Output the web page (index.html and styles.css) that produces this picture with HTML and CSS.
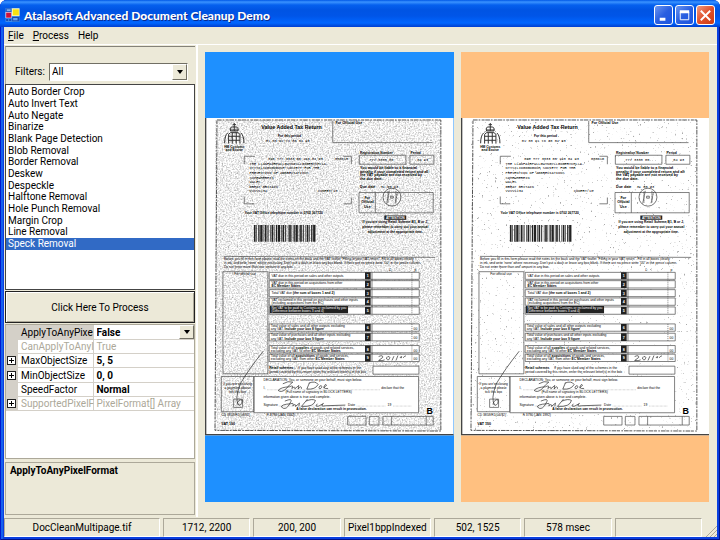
FILE: index.html
```
<!DOCTYPE html>
<html lang="en">
<head>
  <meta charset="UTF-8">
  <title>Atalasoft Advanced Document Cleanup Demo</title>
  <link rel="stylesheet" href="styles.css">
</head>
<body>
  <div class="window">
    <header class="title-bar">
      <svg class="app-icon" viewBox="0 0 42 42">
        <rect x="0" y="0" width="42" height="42" fill="#3d8be8"/>
        <rect x="1" y="1" width="17" height="11" fill="#2a5fc4"/>
        <rect x="4" y="4" width="11" height="5" fill="#7fb4f2"/>
        <rect x="0" y="12" width="18" height="18" fill="#e8e0f0"/>
        <rect x="2" y="14" width="15" height="15" fill="#d0103a"/>
        <rect x="19" y="1" width="23" height="23" fill="#fff9c0"/>
        <rect x="22" y="4" width="18" height="18" fill="#f8e010"/>
        <rect x="2" y="33" width="6" height="6" fill="#1c4ab0"/>
        <rect x="11" y="33" width="6" height="6" fill="#1c4ab0"/>
        <rect x="20" y="27" width="21" height="13" fill="#1c4ab0"/>
        <rect x="23" y="30" width="13" height="7" fill="#6aa6f0"/>
      </svg>
      <h1>Atalasoft Advanced Document Cleanup Demo</h1>
      <div class="window-buttons">
        <button type="button" aria-label="Minimize"><svg viewBox="0 0 18 18"><path d="M5 13h6" stroke="#fff" stroke-width="3"/></svg></button>
        <button type="button" aria-label="Maximize"><svg viewBox="0 0 18 18"><path d="M4 5h10" stroke="#fff" stroke-width="3"/><path d="M4.500 5.500h9v8h-9z" fill="none" stroke="#fff"/></svg></button>
        <button type="button" class="close" aria-label="Close"><svg viewBox="0 0 18 18"><path d="M4 4l10 10M14 4l-10 10" stroke="#fff" stroke-width="2"/></svg></button>
      </div>
    </header>

    <nav class="menu-bar">
      <button type="button"><u>F</u>ile</button>
      <button type="button"><u>P</u>rocess</button>
      <button type="button">Help</button>
    </nav>

    <div class="content">
      <aside class="sidebar">
        <div class="filters">
          <label for="filter">Filters:</label>
          <div class="combo">
            <select id="filter"><option>All</option></select>
            <span class="arrow"></span>
          </div>
        </div>
        <select class="filter-list" size="14" aria-label="Filter list">
          <option>Auto Border Crop</option>
          <option>Auto Invert Text</option>
          <option>Auto Negate</option>
          <option>Binarize</option>
          <option>Blank Page Detection</option>
          <option>Blob Removal</option>
          <option>Border Removal</option>
          <option>Deskew</option>
          <option>Despeckle</option>
          <option>Halftone Removal</option>
          <option>Hole Punch Removal</option>
          <option>Margin Crop</option>
          <option>Line Removal</option>
          <option selected>Speck Removal</option>
        </select>
        <button type="button" class="process">Click Here To Process</button>
        <div class="property-grid">
          <table>
            <tr class="current">
              <td class="gutter"></td>
              <th scope="row" title="ApplyToAnyPixelFormat">ApplyToAnyPixe</th>
              <td class="value"><div class="combo flat"><select aria-label="ApplyToAnyPixelFormat"><option>False</option></select><span class="arrow"></span></div></td>
            </tr>
            <tr class="readonly">
              <td class="gutter"></td>
              <th scope="row" title="CanApplyToAnyPixelFormat">CanApplyToAnyI</th>
              <td class="value">True</td>
            </tr>
            <tr>
              <td class="gutter"><button type="button" class="expand" aria-label="Expand MaxObjectSize"></button></td>
              <th scope="row">MaxObjectSize</th>
              <td class="value">5, 5</td>
            </tr>
            <tr>
              <td class="gutter"><button type="button" class="expand" aria-label="Expand MinObjectSize"></button></td>
              <th scope="row">MinObjectSize</th>
              <td class="value">0, 0</td>
            </tr>
            <tr>
              <td class="gutter"></td>
              <th scope="row">SpeedFactor</th>
              <td class="value">Normal</td>
            </tr>
            <tr class="readonly">
              <td class="gutter"><button type="button" class="expand" aria-label="Expand SupportedPixelFormats"></button></td>
              <th scope="row" title="SupportedPixelFormats">SupportedPixelF</th>
              <td class="value">PixelFormat[] Array</td>
            </tr>
          </table>
        </div>
        <div class="property-help">ApplyToAnyPixelFormat</div>
      </aside>

      <main class="viewers">
        <section class="viewer before">
          <svg class="page" viewBox="18 21 747 954">
            <defs>
              <filter id="grain" x="0" y="0" width="1" height="1">
                <feTurbulence type="fractalNoise" baseFrequency="0.22" numOctaves="3" seed="4"/>
                <feColorMatrix values="0 0 0 0 0.4  0 0 0 0 0.4  0 0 0 0 0.4  2 0 0 0 -0.8"/>
              </filter>
              <filter id="specks" x="0" y="0" width="1" height="1">
                <feTurbulence type="fractalNoise" baseFrequency="0.15" numOctaves="2" seed="9"/>
                <feColorMatrix values="0 0 0 0 0.4  0 0 0 0 0.4  0 0 0 0 0.4  8 0 0 0 -5.5"/>
              </filter>
              <g id="form">
                <!-- page edges -->
                <path d="M20 21V975M18 973H765" fill="none" stroke="#444" stroke-width="4"/>
                <path d="M54 27H727V962L48 960z" fill="none" stroke="#555" stroke-width="3" stroke-dasharray="14 3 5 4 9 2"/>

                <!-- crest -->
                <g fill="none" stroke="#333" stroke-width="3">
                  <path d="M106 36V60M101 41H111M95 60Q90 46 105 48Q121 46 117 60zM94 57H118"/>
                  <path d="M89 98V70L95 65H117L123 70V98M100 66V98M112 66V98M89 76H123M89 88H123"/>
                  <path d="M86 66Q77 74 77 97M126 66Q135 74 135 97"/>
                </g>
                <g class="bold center" font-size="10">
                  <text x="106" y="111">HM Customs</text>
                  <text x="106" y="121">and Excise</text>
                </g>
                <text class="bold center" font-size="16" x="278" y="53">Value Added Tax Return</text>
                <text class="bold center" font-size="10" x="272" y="79">For this period</text>
                <text class="mono" font-size="11" x="201" y="93">01 03 91 to 30 04 93</text>

                <path class="box" d="M402 30V95H702"/>
                <text class="bold" font-size="11" x="410" y="40">For Official Use</text>

                <!-- address -->
                <path class="box" d="M136 160V136H168M434 136H458V160M136 257V279H166M434 279H458V260"/>
                <g class="mono" font-size="11">
                  <text x="208" y="147">098 777 3333 05 193 04 93</text>
                  <text x="409" y="147">000615</text>
                  <text x="152" y="161">THE LLANFAIRPWLLGWYNGYLLGOGERYCHLLA-</text>
                  <text x="152" y="175">NTYSILIOGOGOGOCH SOCIETY FOR THE</text>
                  <text x="152" y="189">PREVENTION OF ABBREVIATIONS</text>
                  <text x="152" y="203">SOMEWHEREIN</text>
                  <text x="152" y="216">WALES</text>
                  <text x="152" y="230">GREAT BRITAIN</text>
                  <text x="152" y="244">VVVV1234</text>
                  <text x="357" y="244">CODERT/10</text>
                </g>
                <text class="bold" font-size="10" x="137" y="310">Your VAT Office telephone number is 0702 367720</text>
                <path d="M165 368H352" fill="none" stroke="#222" stroke-width="50" stroke-dasharray="5 2 2 4 4 2 7 3 2 2 5 3 3 5 2 2"/>

                <!-- registration -->
                <g class="bold" font-size="10">
                  <text x="484" y="129">Registration Number</text>
                  <text x="636" y="129">Period</text>
                </g>
                <path class="box" d="M482 133H622V160H482zM634 133H706V160H634z"/>
                <g class="mono" font-size="11">
                  <text x="512" y="150">777 3333 05</text>
                  <text x="656" y="150">04 93</text>
                </g>
                <g class="bold" font-size="11">
                  <text x="484" y="174">You would be liable to a financial</text>
                  <text x="484" y="185">penalty if your completed return and all</text>
                  <text x="484" y="196">the VAT payable are not received by</text>
                  <text x="484" y="207">the due date.</text>
                  <text x="484" y="231">Due date</text>
                </g>
                <text class="mono" font-size="11" x="546" y="231">31 05 93</text>
                <path class="box" d="M481 245H704V306H481zM530 245V306"/>
                <g class="bold center" font-size="11">
                  <text x="506" y="265">For</text>
                  <text x="506" y="278">Official</text>
                  <text x="506" y="291">Use</text>
                </g>
                <g fill="none" stroke="#333" stroke-width="2">
                  <circle cx="580" cy="259" r="27"/>
                  <path d="M568 242V277M572 240L564 278M592 240V276M597 244L589 278" stroke-dasharray="4 1"/>
                  <path d="M576 256H584V262H576z"/>
                </g>
                <path d="M557 314H623V327H557z" fill="#222"/>
                <text class="bold center light" font-size="10" x="590" y="324">ATTENTION</text>
                <g class="bold center" font-size="10">
                  <text x="590" y="338">If you are using Retail Scheme B1, B or J,</text>
                  <text x="590" y="352">please remember to carry out your annual</text>
                  <text x="590" y="366">adjustment at the appropriate time.</text>
                </g>

                <!-- instructions -->
                <path class="box" d="M75 437L710 440"/>
                <g class="sans" font-size="10">
                  <text x="75" y="449">Before you fill in this form please read the notes on the back and the VAT leaflet "Filling in your VAT return". Fill in all boxes clearly</text>
                  <text x="75" y="461">in ink, and write 'none' where necessary. Don't put a dash or leave any box blank. If there are no pence write "00" in the pence column.</text>
                  <text x="75" y="473">Do not enter more than one amount in any box.</text>
                  <text x="106" y="493">For official use</text>
                  <text x="572" y="481">£</text>
                  <text x="648" y="481">p</text>
                </g>
                <path class="box" d="M72 483H207V790H72z"/>

                <!-- VAT lines -->
                <g class="box white">
                  <path d="M211 485H662V506H211zM211 510H662V532H211zM211 537H662V558H211zM211 562H662V584H211zM211 589H662V611H211z"/>
                  <path d="M211 640H662V662H211zM211 668H662V691H211zM211 705H662V727H211zM211 731H662V753H211z"/>
                  <path d="M520 485V611M520 640V691M520 705V753"/>
                  <path d="M640 485V611M640 640V691M640 705V753" stroke-dasharray="3 3"/>
                </g>
                <path d="M499 485H516V506H499zM499 510H516V532H499zM499 537H516V558H499zM499 562H516V584H499zM499 589H516V611H499zM499 640H516V662H499zM499 668H516V691H499zM499 705H516V727H499zM499 731H516V753H499z" fill="#222"/>
                <g class="bold center light" font-size="11">
                  <text x="507" y="500">1</text>
                  <text x="507" y="525">2</text>
                  <text x="507" y="552">3</text>
                  <text x="507" y="577">4</text>
                  <text x="507" y="604">5</text>
                  <text x="507" y="655">6</text>
                  <text x="507" y="684">7</text>
                  <text x="507" y="720">8</text>
                  <text x="507" y="746">9</text>
                </g>
                <path d="M213 586H448V608H213z" fill="#222"/>
                <g class="sans" font-size="10">
                  <text x="218" y="499">VAT due in this period on sales and other outputs</text>
                  <text x="218" y="519">VAT due in this period on acquisitions from other</text>
                  <text class="bold" x="218" y="529">EC Member States</text>
                  <text x="218" y="551">Total VAT due <tspan class="bold">(the sum of boxes 1 and 2)</tspan></text>
                  <text x="218" y="571">VAT reclaimed in this period on purchases and other inputs</text>
                  <text x="218" y="581">(including acquisitions from the EC)</text>
                  <text class="light" x="218" y="595">Net VAT to be paid to Customs or reclaimed by you</text>
                  <text class="light" x="218" y="605">(Difference between boxes 3 and 4)</text>
                  <text x="216" y="649">Total value of sales and all other outputs excluding</text>
                  <text x="216" y="659">any VAT. <tspan class="bold">Include your box 8 figure</tspan></text>
                  <text x="216" y="677">Total value of purchases and all other inputs excluding</text>
                  <text x="216" y="687">any VAT. <tspan class="bold">Include your box 9 figure</tspan></text>
                  <text x="216" y="714">Total value of all <tspan class="bold">supplies</tspan> of goods and related services,</text>
                  <text x="216" y="724">excluding any VAT, to other <tspan class="bold">EC Member States</tspan></text>
                  <text x="216" y="740">Total value of all <tspan class="bold">acquisitions</tspan> of goods and services,</text>
                  <text x="216" y="750">excluding any VAT, from other <tspan class="bold">EC Member States</tspan></text>
                  <text x="645" y="658">00</text>
                  <text x="645" y="686">00</text>
                  <text x="645" y="723">00</text>
                  <text x="645" y="748">00</text>
                  <text class="bold" x="211" y="775">Retail schemes</text>
                  <text x="298" y="775">If you have used any of the schemes in the</text>
                  <text x="211" y="789">period covered by this return, enter the relevant letter(s) in the box</text>
                </g>
                <path class="box white" d="M523 767H661V791H523z"/>

                <!-- declaration -->
                <path class="box white" d="M165 798H660V907H165z"/>
                <path class="box" d="M67 798H165V904H67z"/>
                <g class="center sans" font-size="10">
                  <text x="116" y="824">If you are enclosing</text>
                  <text x="116" y="837">a payment please</text>
                  <text x="116" y="849">tick this box</text>
                </g>
                <path class="box" d="M104 866H131V891H104z"/>
                <g class="sans" font-size="10">
                  <text x="194" y="812">DECLARATION: You, or someone on your behalf, must sign below.</text>
                  <text x="194" y="836">I,</text>
                  <text x="548" y="836">declare that the</text>
                  <text x="260" y="847">(Full name of signatory in BLOCK LETTERS)</text>
                  <text x="194" y="863">information given above is true and complete.</text>
                  <text x="194" y="886">Signature</text>
                  <text x="448" y="886">Date</text>
                  <text x="567" y="887">19</text>
                  <text class="bold" x="292" y="900">A false declaration can result in prosecution.</text>
                </g>
                <path d="M205 838H545M240 887H440M474 887H560M584 887H640" fill="none" stroke="#555" stroke-dasharray="2 2"/>

                <!-- handwriting -->
                <g fill="none" stroke="#222" stroke-width="2">
                  <path d="M252 820Q268 810 282 815Q272 822 262 835Q248 848 238 840Q246 830 272 829Q286 822 279 834Q290 826 288 835L300 825L298 836Q308 822 308 835"/>
                  <path d="M332 817L324 836Q350 838 358 822Q350 810 330 818M364 826Q356 836 366 834Q374 826 364 826M374 832Q388 824 380 822Q368 836 388 834"/>
                  <path d="M258 872Q282 862 276 874Q262 904 248 890Q246 882 276 880Q286 876 282 886Q292 878 290 888L302 878L300 888"/>
                  <path d="M326 866L308 888Q346 890 350 870Q340 864 322 872M356 880Q346 890 360 887L374 879Q362 890 380 886L440 884"/>
                  <path d="M540 738Q554 732 552 741L540 750Q552 752 558 748M566 738Q560 748 570 748Q578 738 568 738M586 737L580 750M598 735L592 750M607 738Q602 742 608 742Q612 738 607 738M614 742L617 738L622 736"/>
                  <path d="M193 722Q150 776 124 820Q106 868 120 885Q132 882 129 868Q118 866 114 882"/>
                </g>

                <!-- footer -->
                <text class="sans" font-size="10" x="67" y="916">CD 3859/R1(04/92)</text>
                <text class="sans" font-size="10" x="204" y="917">F 3790 (JAN 1992)</text>
                <text class="bold" font-size="11" x="67" y="943">VAT 100</text>
                <text class="bold" font-size="27" x="684" y="912">B</text>
                <path class="box" d="M447 918H502V944H447zM512 918H541V944H512zM553 918H704V944H553zM579 918V944M683 918V944"/>
              </g>
            </defs>
            <rect x="18" y="21" width="747" height="954" fill="#fff"/>
            <rect x="50" y="28" width="677" height="933" filter="url(#grain)"/>
            <use href="#form"/>
          </svg>
        </section>
        <section class="viewer after">
          <svg class="page" viewBox="18 21 747 954">
            <rect x="18" y="21" width="747" height="954" fill="#fff"/>
            <rect x="50" y="28" width="677" height="933" filter="url(#specks)"/>
            <use href="#form"/>
          </svg>
        </section>
      </main>
    </div>

    <footer class="status-bar">
      <div class="file">DocCleanMultipage.tif</div>
      <div>1712, 2200</div>
      <div>200, 200</div>
      <div>Pixel1bppIndexed</div>
      <div>502, 1525</div>
      <div>578 msec</div>
      <div></div>
      <svg class="grip" viewBox="0 0 12 12"><path d="M1 12L12 1M5 12L12 5M9 12L12 9" stroke="#aca899"/></svg>
    </footer>
  </div>
</body>
</html>
```

FILE: styles.css
```
* {
  box-sizing: border-box;
}

body {
  margin: 0;
  background-color: #fff;
  font-family: Roboto, "Liberation Sans", Arial, sans-serif;
  font-size: 10px;
  color: #000;
}

button, select {
  font: inherit;
  color: inherit;
}

.window {
  display: flex;
  flex-direction: column;
  height: 100vh;
  padding: 0 3px 3px 4px;
  border-radius: 7px 7px 0 0;
  background-color: #0a3fe0;
  box-shadow: inset 1px 0 #0019cf, inset -1px -1px #00138c, inset 3px 0 #1560ee;
  overflow: hidden;
}

/* title bar */
.title-bar {
  display: flex;
  align-items: center;
  height: 27px;
  flex: none;
  margin: 0 -3px 0 -4px;
  padding: 3px 5px 0 5px;
  background: linear-gradient(#0058e6 0, #3a93ff 2px, #0560ee 5px, #0054e3 10px, #0055e8 16px, #0066ff 23px, #0048d8 26px, #003dd7 27px);
}

.app-icon {
  flex: none;
  width: 15px;
  height: 14px;
}

.title-bar h1 {
  flex: 1;
  margin: 0 0 0 4px;
  font-family: Lato, "Liberation Sans", sans-serif;
  font-size: 12px;
  font-weight: 900;
  color: #fff;
  text-shadow: 1px 1px #0a2a8c;
}

.window-buttons {
  display: flex;
  gap: 2px;
}

.window-buttons button {
  width: 19px;
  height: 20px;
  padding: 0;
  border: 1px solid #fff;
  border-radius: 3px;
  background: linear-gradient(135deg, #6c96f0, #2a5fe0 50%, #1c55e0);
}

.window-buttons .close {
  background: linear-gradient(135deg, #f09a80, #e0512c 50%, #cc3a12);
}

.window-buttons svg {
  display: block;
  width: 100%;
}

/* menu */
.menu-bar {
  display: flex;
  flex: none;
  gap: 9px;
  height: 18px;
  padding: 0 4px;
  background-color: #ece9d8;
  border-bottom: 1px solid #fff;
}

.menu-bar button {
  padding: 0;
  border: 0;
  background: none;
}

.content {
  display: flex;
  flex: 1;
  min-height: 0;
  background-color: #ece9d8;
}

/* left column */
.sidebar {
  display: flex;
  flex-direction: column;
  width: 194px;
  padding: 1px 1px 2px 1px;
  border-right: 2px solid #fff;
}

.filters {
  display: flex;
  align-items: center;
  gap: 4px;
  height: 38px;
  padding: 12px 7px 0 9px;
  border-top: 1px solid #848278;
  border-left: 1px solid #aca899;
}

.combo {
  display: flex;
  flex: 1;
  height: 18px;
  border: 1px solid;
  border-color: #716f64 #fff #fff #716f64;
  background-color: #fff;
}

.combo select {
  flex: 1;
  min-width: 0;
  padding: 0 2px;
  border: 0;
  appearance: none;
  background: none;
}

.combo .arrow {
  display: flex;
  align-items: center;
  justify-content: center;
  width: 15px;
  border: 1px solid;
  border-color: #fff #716f64 #716f64 #fff;
  background-color: #ece9d8;
}

.combo .arrow::after {
  content: "";
  border: 3px solid transparent;
  border-top: 4px solid #000;
  border-bottom: 0;
}

.combo.flat {
  height: 14px;
  border: 0;
}

.combo.flat select {
  padding: 0;
}

.filter-list {
  height: 206px;
  padding: 1px 0 0;
  border: 1px solid #444;
  border-radius: 0;
  background-color: #fff;
  overflow: hidden;
  outline: 0;
}

.filter-list option {
  min-height: 0;
  padding: 0 2px 1px;
}

.filter-list option:nth-child(3n) {
  padding-bottom: 0;
}

.filter-list option:checked {
  color: #fff;
  background: #316ac5 linear-gradient(#316ac5, #316ac5);
}

.process {
  height: 32px;
  margin-top: 1px;
  border: 1px solid #222;
  background-color: #ece9d8;
  box-shadow: inset 1px 1px #fff, inset -1px -1px #aca899;
}

/* property grid */
.property-grid {
  flex: 1;
  margin-top: 1px;
  border: 1px solid #aca899;
  background-color: #fff;
}

.property-grid table {
  width: 100%;
  height: 86px;
  table-layout: fixed;
  border-collapse: collapse;
}

.property-grid td,
.property-grid th {
  padding: 0 0 0 3px;
  border-bottom: 1px solid #d4d0c8;
  font-weight: normal;
  line-height: 13px;
  text-align: left;
  white-space: nowrap;
}

.property-grid th {
  width: 75px;
  border-right: 1px solid #d4d0c8;
}

.property-grid .gutter {
  width: 12px;
  padding: 0 0 0 1px;
  border-color: #d4d0c8;
  background-color: #d4d0c8;
}

.property-grid .value {
  font-weight: bold;
}

.property-grid .current th {
  background-color: #d4d0c8;
}

.property-grid .readonly th,
.property-grid .readonly .value {
  font-weight: normal;
  color: #aca899;
}

.expand {
  display: block;
  width: 9px;
  height: 9px;
  padding: 0;
  border: 1px solid #222;
  background: linear-gradient(#000, #000) center / 5px 1px no-repeat, linear-gradient(#000, #000) center / 1px 5px no-repeat, #fff;
}

.property-help {
  height: 53px;
  margin-top: 3px;
  padding: 2px 4px;
  border: 1px solid #aca899;
  font-weight: bold;
}

/* image viewers */
.viewers {
  display: flex;
  flex: 1;
  gap: 7px;
  padding: 7px 8px 15px 7px;
}

.viewer {
  display: flex;
  flex: 1;
  align-items: center;
}

.before {
  background-color: #1e90ff;
}

.after {
  background-color: #ffc080;
}

.page {
  display: block;
  width: 100%;
}

.page .box {
  fill: none;
  stroke: #444;
  stroke-width: 2px;
}

.page .white {
  fill: #fff;
}

.page .sans,
.page .bold {
  font-family: "Liberation Sans", Arial, sans-serif;
}

.page .bold {
  font-weight: bold;
}

.page .mono {
  font-family: "Liberation Mono", monospace;
}

.page .center {
  text-anchor: middle;
}

.page .light {
  fill: #fff;
}

/* status bar */
.status-bar {
  display: flex;
  flex: none;
  gap: 3px;
  height: 20px;
  padding-top: 1px;
  background-color: #ece9d8;
}

.status-bar div {
  flex: 87;
  min-width: 0;
  border: 1px solid;
  border-color: #aca899 #fff #fff #aca899;
  line-height: 17px;
  text-align: center;
  white-space: nowrap;
}

.status-bar .file {
  flex: 157;
}

.grip {
  align-self: flex-end;
  width: 12px;
  height: 12px;
}
```
